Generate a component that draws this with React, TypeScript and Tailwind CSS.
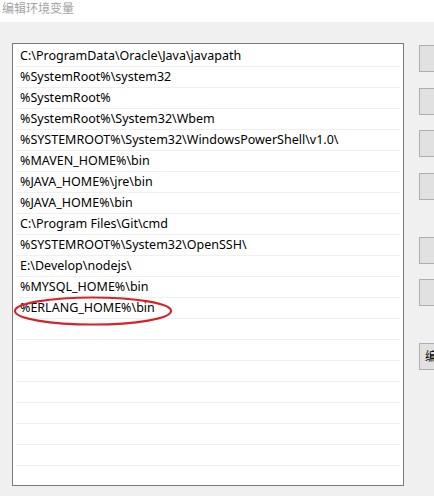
const paths = [
  "C:\\ProgramData\\Oracle\\Java\\javapath",
  "%SystemRoot%\\system32",
  "%SystemRoot%",
  "%SystemRoot%\\System32\\Wbem",
  "%SYSTEMROOT%\\System32\\WindowsPowerShell\\v1.0\\",
  "%MAVEN_HOME%\\bin",
  "%JAVA_HOME%\\jre\\bin",
  "%JAVA_HOME%\\bin",
  "C:\\Program Files\\Git\\cmd",
  "%SYSTEMROOT%\\System32\\OpenSSH\\",
  "E:\\Develop\\nodejs\\",
  "%MYSQL_HOME%\\bin",
  "%ERLANG_HOME%\\bin",
];

const rows = [...paths, ...Array(8).fill("")];

const buttons = [
  { label: "新建(N)", mt: "mt-0" },
  { label: "编辑(E)", mt: "mt-[16px]" },
  { label: "浏览(B)...", mt: "mt-[15px]" },
  { label: "删除(D)", mt: "mt-[16px]" },
  { label: "上移(U)", mt: "mt-[37px]" },
  { label: "下移(O)", mt: "mt-[15px]" },
  { label: "编辑文本(T)...", mt: "mt-[37px]", left: true },
];

export default function App() {
  return (
    <div className="w-[434px] h-[496px] bg-[#f0f0f0] overflow-hidden relative font-['Noto_Sans','Noto_Sans_CJK_SC',sans-serif]">
      {/* title bar */}
      <div className="h-[22px] bg-white pl-[2px] pt-[1px] text-[12px] leading-[16px] text-[#a3a3a3]">
        编辑环境变量
      </div>

      <div className="flex w-[600px]">
        {/* list box */}
        <div className="ml-[12px] mt-[21px] w-[392px] h-[443px] shrink-0 border border-[#7a7a7a] bg-white pt-[2px] px-[3px] overflow-hidden">
          {rows.map((p, i) => (
            <div
              key={i}
              className="h-[21px] border-b border-[#f0f0f0] pl-[4px] text-[12.5px] leading-[20px] text-black whitespace-nowrap"
            >
              {p}
            </div>
          ))}
        </div>

        {/* buttons */}
        <div className="ml-[15px] mt-[23px] flex flex-col shrink-0">
          {buttons.map((b, i) => (
            <button
              key={i}
              className={`${b.mt} w-[86px] h-[27px] border border-[#adadad] bg-[#e1e1e1] text-[12px] text-black whitespace-nowrap flex items-center ${
                b.left ? "justify-start pl-[5px]" : "justify-center"
              }`}
            >
              {b.label}
            </button>
          ))}
        </div>
      </div>

      {/* red annotation ellipse */}
      <svg className="absolute left-[13px] top-[295px]" width="162" height="32" viewBox="0 0 162 32">
        <ellipse cx="80" cy="16" rx="78" ry="13.5" fill="none" stroke="#d8222a" strokeWidth="2.2" />
      </svg>
    </div>
  );
}
